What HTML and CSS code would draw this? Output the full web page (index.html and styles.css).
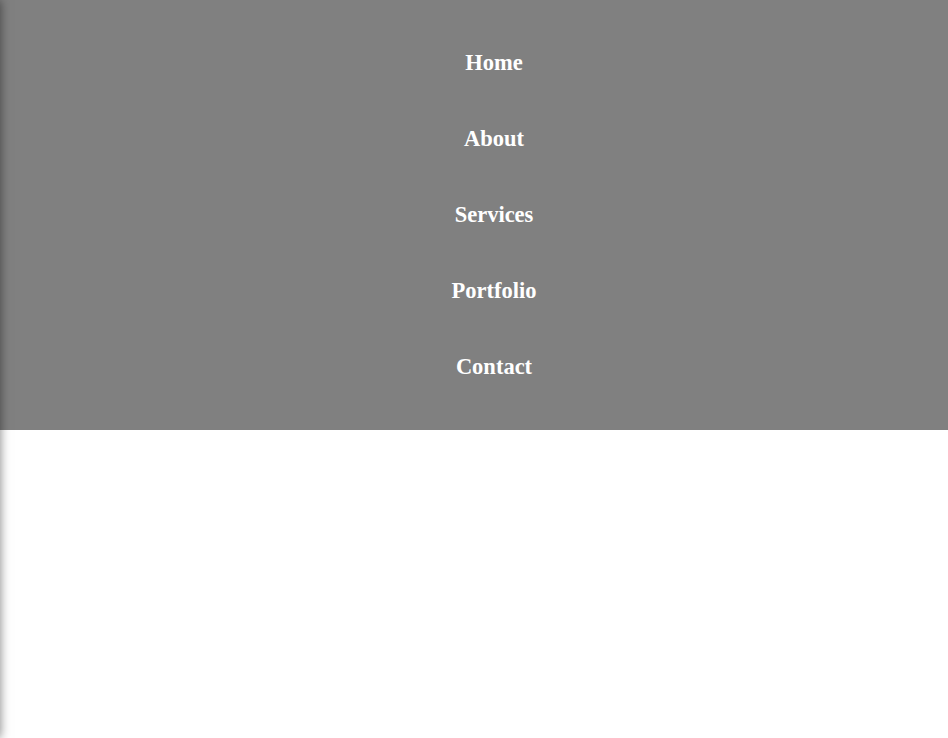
FILE: index.html
```html
<!DOCTYPE html>
<html lang="en">
<head>
<meta charset="utf-8">
<title>Menu</title>
<link rel="stylesheet" href="styles.css">
</head>
<body>
<aside class="drawer"></aside>
<nav class="menu">
  <ul class="menu-list">
    <li class="menu-item"><a class="menu-link" href="#">Home</a></li>
    <li class="menu-item"><a class="menu-link" href="#">About</a></li>
    <li class="menu-item"><a class="menu-link" href="#">Services</a></li>
    <li class="menu-item"><a class="menu-link" href="#">Portfolio</a></li>
    <li class="menu-item"><a class="menu-link" href="#">Contact</a></li>
  </ul>
</nav>
</body>
</html>
```
FILE: styles.css
```css
html, body {
  margin: 0;
  padding: 0;
  background: #ffffff;
  font-family: "Liberation Serif", "Times New Roman", serif;
}
.drawer {
  position: fixed;
  top: 0;
  left: -250px;
  width: 250px;
  height: 100vh;
  background: #ffffff;
  box-shadow: 0 0 10px rgba(0, 0, 0, 0.5);
  z-index: 10;
}
.menu {
  background: #808080;
  padding: 25px 0 25px;
}
.menu-list {
  margin: 0;
  padding-left: 40px;
  list-style: none;
  text-align: center;
}
.menu-item {
  height: 76px;
  line-height: 76px;
}
.menu-link {
  color: #ffffff;
  font-size: 22.5px;
  font-weight: bold;
  text-decoration: none;
}
```
